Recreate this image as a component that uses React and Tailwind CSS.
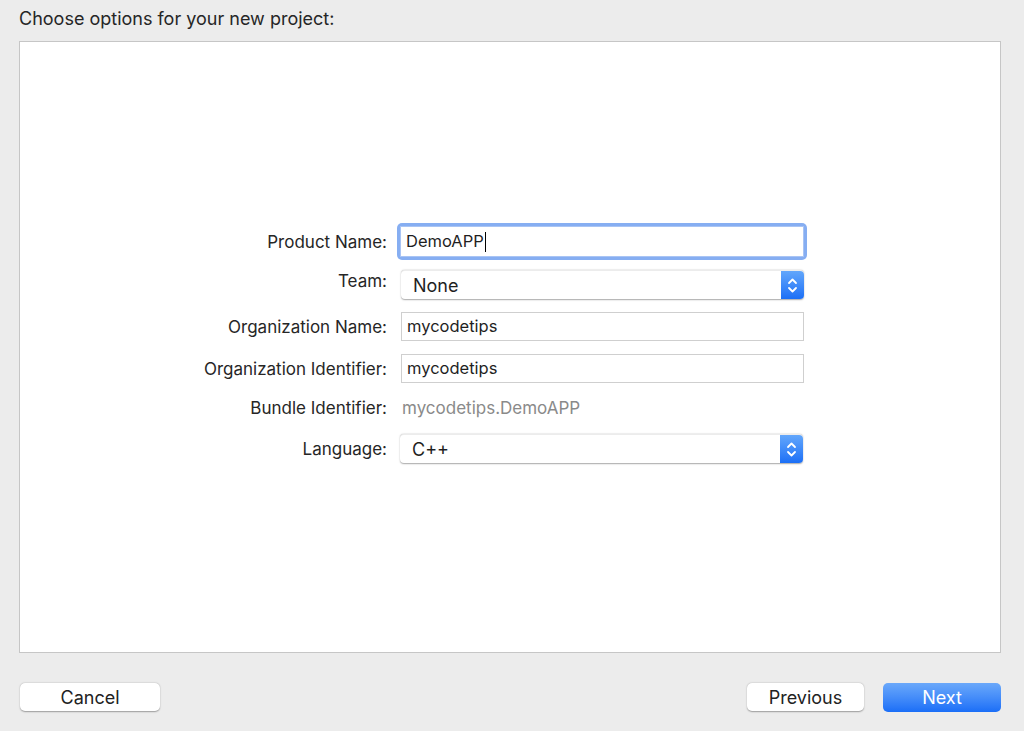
import React from 'react';

const font = { fontFamily: 'Inter, "Liberation Sans", sans-serif' };

// blue up/down stepper at the right end of a popup button
const Stepper = () => (
    <div className="w-[23px] h-full rounded-r-[4px] bg-gradient-to-b from-[#62a6fb] to-[#1b6ff6] flex items-center justify-center">
        <svg width="11" height="17" viewBox="0 0 11 17" fill="none" stroke="white" strokeWidth="1.8" strokeLinecap="round" strokeLinejoin="round">
            <path d="M2 6l3.5-3.5L9 6" />
            <path d="M2 11l3.5 3.5L9 11" />
        </svg>
    </div>
);

const Popup = ({ value }) => (
    <div className="w-[403px] h-[29px] flex bg-white rounded-[4px] shadow-[0_0.5px_1.5px_rgba(0,0,0,0.35)] border-t border-[#ececec]">
        <div className="flex-1 flex items-center pl-[12px] text-[18px] text-[#1f1f1f]">{value}</div>
        <Stepper />
    </div>
);

const TextField = ({ value }) => (
    <div className="w-[403px] h-[29px] flex items-center pl-[5px] bg-white border border-[#cfcfcf] text-[16.5px] text-[#1f1f1f]">
        {value}
    </div>
);

const Label = ({ children, className = 'mt-[2px]' }) => (
    <div className={`w-[367px] text-right text-[17px] text-[#262626] ${className}`}>{children}</div>
);

const App = () => {
    return (
        <div style={font} className="w-[1024px] h-[731px] bg-[#ececec] flex flex-col">
            {/* Header */}
            <div className="h-[41px] pl-[19px] pt-[5px] text-[18px] text-[#262626]">Choose options for your new project:</div>

            {/* Panel */}
            <div className="ml-[19px] w-[982px] h-[612px] bg-white border border-[#c6c6c6] pt-[181px]">
                <div className="flex flex-col">
                    {/* Product Name */}
                    <div className="h-[37px] flex items-center">
                        <Label>Product Name:</Label>
                        <div className="ml-[10px] p-[3px] rounded-[5px] bg-[#86aef2]">
                            <div className="w-[404px] h-[31px] bg-white flex items-center pl-[5px] text-[16.5px] text-[#1f1f1f] border border-[#a9c4f4]">
                                DemoAPP
                                <span className="w-px h-[20px] bg-black ml-[1px]" />
                            </div>
                        </div>
                    </div>

                    {/* Team */}
                    <div className="h-[29px] mt-[10px] flex">
                        <Label className="-mt-[1px]">Team:</Label>
                        <div className="ml-[14px]"><Popup value="None" /></div>
                    </div>

                    {/* Organization Name */}
                    <div className="h-[29px] mt-[13px] flex items-center">
                        <Label>Organization Name:</Label>
                        <div className="ml-[14px]"><TextField value="mycodetips" /></div>
                    </div>

                    {/* Organization Identifier */}
                    <div className="h-[29px] mt-[13px] flex items-center">
                        <Label>Organization Identifier:</Label>
                        <div className="ml-[14px]"><TextField value="mycodetips" /></div>
                    </div>

                    {/* Bundle Identifier */}
                    <div className="h-[28px] mt-[11px] flex items-center">
                        <Label>Bundle Identifier:</Label>
                        <div className="ml-[15px] mt-[2px] text-[17px] text-[#8a8a8a]">mycodetips.DemoAPP</div>
                    </div>

                    {/* Language */}
                    <div className="h-[29px] mt-[12px] flex items-center">
                        <Label>Language:</Label>
                        <div className="ml-[13px]"><Popup value="C++" /></div>
                    </div>
                </div>
            </div>

            {/* Footer buttons */}
            <div className="mt-[30px] px-[20px] flex items-start">
                <button className="w-[140px] h-[28px] bg-white rounded-[5px] shadow-[0_0.5px_1.5px_rgba(0,0,0,0.35)] text-[18px] text-[#222]">Cancel</button>
                <div className="flex-1" />
                <button className="w-[117px] h-[28px] bg-white rounded-[5px] shadow-[0_0.5px_1.5px_rgba(0,0,0,0.35)] text-[18px] text-[#222]">Previous</button>
                <button className="ml-[19px] mr-[3px] w-[118px] h-[29px] rounded-[5px] bg-gradient-to-b from-[#6aa8fa] to-[#1a6ef7] text-[18px] text-white">Next</button>
            </div>
        </div>
    );
};

export default App;
